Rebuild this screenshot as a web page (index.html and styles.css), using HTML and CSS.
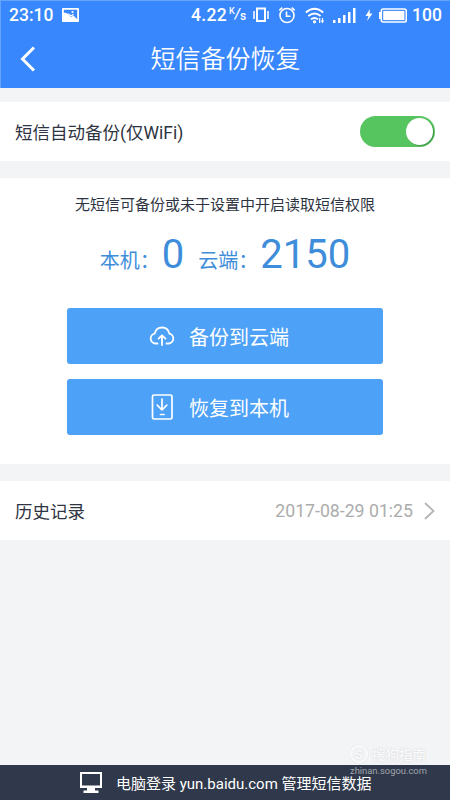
FILE: index.html
```html
<!DOCTYPE html>
<html lang="zh-CN">
<head>
<meta charset="utf-8">
<title>短信备份恢复</title>
<link rel="stylesheet" href="styles.css">
</head>
<body>
<div class="screen">
  <header class="top">
    <div class="status">
      <span class="clock">23:10</span>
      <svg class="photo" width="17" height="14" viewBox="0 0 17 14"><rect width="17" height="14" rx="1" fill="#fff"/><path d="M1.800 1.800h13.400v9.400L11.500 7.500 9 9.200 5 5.200 1.800 4.500z" fill="#3987fd"/><path d="M6 5.800l3 2.200 2.500-1.800" stroke="#fff" stroke-width="1.300" fill="none"/><circle cx="10.500" cy="4" r="1.100" fill="#fff"/></svg>
      <span class="speed">4.22</span>
      <span class="unit"><span>K</span><i>/</i><b>s</b></span>
      <svg class="vibrate" width="16" height="16" viewBox="0 0 16 16" fill="none" stroke="#fff"><rect x="4" y="1.500" width="8" height="12.500" stroke-width="2"/><path d="M1 4v8M15 4v8" stroke-width="1.500"/></svg>
      <svg class="alarm" width="18" height="18" viewBox="0 0 18 18" fill="none" stroke="#fff" stroke-width="1.600"><circle cx="9" cy="9.500" r="7"/><path d="M8.500 5.500v4.700h4M1.300 4.400l3-2.800M16.700 4.400l-3-2.800"/></svg>
      <svg class="wifi" width="20" height="17" viewBox="0 0 20 17" fill="none" stroke="#fff" stroke-width="1.900"><path d="M.8 5.500q8.700-7.500 17.400 0M3.400 9q6.100-5 12.200 0M6 12.300q3.500-2.800 7 0"/><circle cx="9.500" cy="14.800" r="1.600" fill="#fff" stroke="none"/><path d="M14.700 11v5M17.500 11v5" stroke-width="1.200"/><path d="M15.800 13.500h3.400l-1.700 2.500z" fill="#fff" stroke="none"/></svg>
      <svg class="signal" width="23" height="15" viewBox="0 0 23 15" fill="#fff"><path d="M0 12h2.500v3H0zM5 10h2.500v5H5zM10 7h2.500v8H10zM15 4h2.500v11H15zM20 0h2.500v15H20z"/></svg>
      <svg class="bolt" width="8" height="12" viewBox="0 0 8 12" fill="#fff"><path d="M5 0 .5 7h3L2 12l5.500-7.500h-3z"/></svg>
      <svg class="battery" width="28" height="15" viewBox="0 0 28 15"><path d="M0 4h2.500v7H0z" fill="#fff"/><rect x="2.300" y="1" width="25" height="13" rx="2" fill="none" stroke="#fff" stroke-width="1.600"/><rect x="4.200" y="2.900" width="21.200" height="9.200" fill="#fff"/></svg>
      <span class="percent">100</span>
    </div>
    <div class="titlebar">
      <svg class="back" width="16" height="26" viewBox="0 0 16 26" fill="none" stroke="#fff" stroke-width="3"><path d="M14 1.500 2.500 13 14 24.500"/></svg>
      <h1>短信备份恢复</h1>
    </div>
  </header>
  <main>
    <section class="row">
      <span>短信自动备份(仅WiFi)</span>
      <span class="switch"><span class="knob"></span></span>
    </section>
    <section class="panel">
      <p class="notice">无短信可备份或未于设置中开启读取短信权限</p>
      <div class="counts"><span class="local">本机：</span><strong class="zero">0</strong><span class="cloud">云端：</span><strong>2150</strong></div>
      <div class="button">
        <svg width="26" height="20" viewBox="0 0 26 20" fill="none" stroke="#fff" stroke-width="1.800" stroke-linecap="round" stroke-linejoin="round"><path d="M8.500 17.500H6.500a5 5 0 0 1-.8-9.900C6.500 3.800 9.400 1.500 13 1.500s6.500 2.300 7.300 6.100a5 5 0 0 1-.8 9.900h-2M13 19V9.500M9.500 12.700 13 9.300l3.500 3.400"/></svg>
        <span>备份到云端</span>
      </div>
      <div class="button">
        <svg width="26" height="26" viewBox="0 0 26 26" fill="none" stroke="#fff" stroke-width="1.700" stroke-linecap="round" stroke-linejoin="round"><rect x="3.500" y="1" width="19.500" height="24" rx="1.500"/><path d="M13 5v10.500M8.200 11.200 13 16l4.800-4.800M11.500 20.500h3.500"/></svg>
        <span>恢复到本机</span>
      </div>
    </section>
    <section class="row">
      <span>历史记录</span>
      <span class="date">2017-08-29 01:25</span>
      <svg class="chevron" width="11" height="18" viewBox="0 0 11 18" fill="none" stroke="#b5b5b5" stroke-width="1.800"><path d="M1 1l8.500 8L1 17"/></svg>
    </section>
  </main>
  <footer>
    <svg width="22" height="21" viewBox="0 0 22 21"><path fill="#fff" fill-rule="evenodd" d="M0 0h22v16h-7v2.500h3.500V21h-15v-2.500H7V16H0zM2 2v11.500h18V2z"/></svg>
    <span>电脑登录 yun.baidu.com 管理短信数据</span>
  </footer>
  <div class="watermark">
    <div class="brand"><span class="badge">S</span><span>搜狗指南</span></div>
    <div class="site">zhinan.sogou.com</div>
  </div>
</div>
</body>
</html>
```
FILE: styles.css
```css
* { box-sizing: border-box; }
body { margin: 0; }
.screen {
  position: relative;
  width: 450px;
  height: 800px;
  overflow: hidden;
  display: flex;
  flex-direction: column;
  background: #f3f4f6;
  color: #2e3442;
  font-family: Roboto, "Noto Sans CJK SC", sans-serif;
  font-size: 17.5px;
}
svg { flex: none; display: block; }
.top {
  height: 88px;
  background: #3987fd;
  color: #fff;
  border-left: 1px solid #65a3fd;
  border-top: 1px solid #65a3fd;
}
.status {
  height: 28px;
  display: flex;
  align-items: center;
  padding-left: 8px;
  font-size: 17.5px;
  font-weight: 500;
  line-height: 28px;
  white-space: nowrap;
}
.clock { width: 53px; }
.photo { margin-right: 112px; }
.speed { width: 38px; letter-spacing: .3px; }
.unit { display: flex; width: 24px; font-size: 11px; line-height: 14px; }
.unit span { font-size: 9px; margin-top: -3px; }
.unit i { font-size: 14px; }
.unit b { font-weight: 500; font-size: 12px; margin-top: 2px; }
.vibrate { margin-right: 9px; }
.alarm { margin-right: 9px; }
.wifi { margin-right: 8px; }
.signal { margin-right: 9px; }
.bolt { margin-right: 6px; }
.battery { margin-right: 5px; }
.titlebar {
  display: grid;
  grid-template-columns: 50px 1fr 50px;
  align-items: center;
  height: 59px;
}
.back { margin-left: 19px; }
h1 { margin: 2px 0 0; font-size: 25px; font-weight: 350; line-height: 38px; text-align: center; }
main { padding-top: 14px; }
.row {
  display: flex;
  align-items: center;
  height: 59px;
  padding: 0 15px;
  background: #fff;
}
.switch {
  width: 75px;
  height: 31px;
  margin-left: auto;
  padding: 2px;
  border-radius: 16px;
  background: #56c45f;
  display: flex;
  justify-content: flex-end;
}
.knob { width: 27px; height: 27px; border-radius: 50%; background: #fff; box-shadow: 1px 1px 1px #43984b; }
.panel {
  height: 286px;
  margin: 17px 0;
  padding-top: 15px;
  background: #fff;
  display: flex;
  flex-direction: column;
  align-items: center;
}
.notice { margin: 0; font-size: 15px; line-height: 24px; }
.counts {
  display: flex;
  align-items: baseline;
  height: 60px;
  margin: 8px 0 23px;
  color: #3e8dda;
  font-size: 20px;
  line-height: 60px;
}
.counts strong { margin-left: 2px; font-size: 40px; font-weight: 400; }
.counts .zero { margin-right: 14px; }
.button {
  width: 316px;
  height: 56px;
  margin-bottom: 15px;
  padding-left: 82px;
  display: flex;
  align-items: center;
  gap: 14px;
  border-radius: 3px;
  background: #4da1f7;
  color: #fff;
  font-size: 20px;
}
.date { margin-left: auto; color: #acacac; font-size: 17.7px; }
.chevron { margin-left: 11px; }
footer {
  height: 35px;
  margin-top: auto;
  padding-left: 80px;
  display: flex;
  align-items: center;
  gap: 14px;
  background: #30394b;
  color: #fff;
  font-size: 15px;
  white-space: nowrap;
}
.watermark { position: absolute; left: 350px; top: 743px; color: #fafafb; white-space: nowrap; }
.brand { display: flex; align-items: center; gap: 4px; height: 21px; font-size: 13.5px; font-weight: 500; text-shadow: 0 0 2px #d0d2d5; }
.badge { width: 18px; height: 18px; border: 1px solid #fff; border-radius: 50%; line-height: 16px; text-align: center; font-weight: 700; box-shadow: 0 0 2px #d8dadd; }
.site { font-size: 9.4px; line-height: 14px; color: #a1a5ad; }
```
